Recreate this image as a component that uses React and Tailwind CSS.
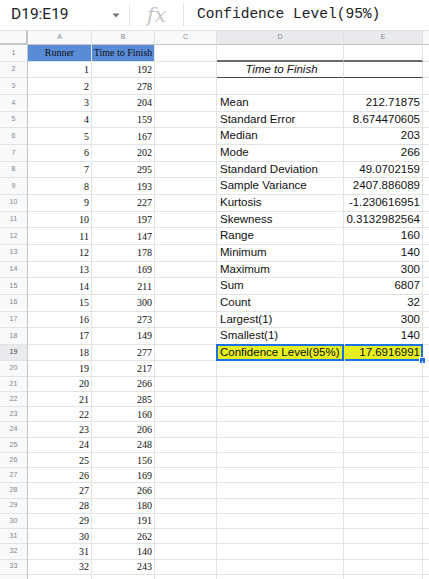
const times = [192, 278, 204, 159, 167, 202, 295, 193, 227, 197, 147, 178, 169, 211, 300, 273, 149, 277, 217, 266, 285, 160, 206, 248, 156, 169, 266, 180, 191, 262, 140, 243]

// rows 4..19 of the summary table
const stats = [
  ['Mean', '212.71875'],
  ['Standard Error', '8.674470605'],
  ['Median', '203'],
  ['Mode', '266'],
  ['Standard Deviation', '49.0702159'],
  ['Sample Variance', '2407.886089'],
  ['Kurtosis', '-1.230616951'],
  ['Skewness', '0.3132982564'],
  ['Range', '160'],
  ['Minimum', '140'],
  ['Maximum', '300'],
  ['Sum', '6807'],
  ['Count', '32'],
  ['Largest(1)', '300'],
  ['Smallest(1)', '140'],
  ['Confidence Level(95%)', '17.6916991'],
]

const serif = { fontFamily: '"Liberation Serif", "Times New Roman", serif' }
const sans = { fontFamily: '"Liberation Sans", Arial, sans-serif' }

function FormulaBar() {
  return (
    <div className="h-[31px] flex items-center border-b border-[#e1e3e1] bg-white">
      <div className="w-[108px] pl-[11px] text-[15.5px] text-[#202124]" style={{ fontFamily: 'Roboto, sans-serif' }}>
        D19:E19
      </div>
      <svg width="8" height="5" viewBox="0 0 8 5" className="ml-[4px]">
        <polygon points="0.5,0.5 7.5,0.5 4,4.5" fill="#70757a" />
      </svg>
      <div className="ml-[9px] w-px h-[22px] bg-[#e1e3e1]" />
      <div className="w-[53px] text-center text-[21px] italic text-[#c2c5c9] leading-none" style={{ fontFamily: '"DejaVu Serif", "Liberation Serif", serif', fontWeight: 300 }}>
        fx
      </div>
      <div className="w-px h-[22px] bg-[#e1e3e1]" />
      <div className="pl-[13px] text-[14.55px] text-[#202124] whitespace-nowrap" style={{ fontFamily: '"Liberation Mono", "DejaVu Sans Mono", monospace' }}>
        Confidence Level(95%)
      </div>
    </div>
  )
}

function HeaderRow() {
  const cols = [
    ['A', 'w-[64px]', false],
    ['B', 'w-[63px]', false],
    ['C', 'w-[62px]', false],
    ['D', 'w-[127px]', true],
    ['E', 'w-[79px]', true],
    ['', 'w-[40px]', false],
  ]
  return (
    <div className="flex h-[14px]">
      <div className="w-[28px] shrink-0 bg-[#f8f9fa] border-r-2 border-b-2 border-[#c4c7c5]" />
      {cols.map(([l, w, sel], i) => (
        <div
          key={i}
          className={`${w} shrink-0 flex items-center justify-center border-r border-b border-r-[#e1e3e1] border-b-[#c4c7c5] text-[7px] text-[#80868b] ${sel ? 'bg-[#e8eaed]' : 'bg-[#f8f9fa]'}`}
          style={sans}
        >
          {l}
        </div>
      ))}
    </div>
  )
}

function Row({ n }) {
  const tall = n <= 19
  const h = tall ? 'h-[16.67px]' : 'h-[15.24px]'
  const grid = 'border-r border-b border-[#e2e3e3]'
  const a = n === 1 ? 'Runner' : n <= 33 ? n - 1 : ''
  const b = n === 1 ? 'Time to Finish' : n <= 33 ? times[n - 2] : ''
  const head = n === 1
  const stat = n >= 4 && n <= 19 ? stats[n - 4] : null
  const sel = n === 19
  const edge = n === 1 ? 'border-b-2 border-b-[#6b6b6b]' : n === 2 ? 'border-b border-b-[#4a4a4a]' : 'border-b'

  return (
    <div className={`flex ${h}`}>
      <div className={`w-[28px] shrink-0 flex items-center justify-center border-r border-b border-r-[#c4c7c5] border-b-[#e2e3e3] text-[7px] ${sel ? 'bg-[#e8eaed] text-[#3c4043]' : 'bg-[#f8f9fa] text-[#80868b]'}`} style={sans}>
        {n <= 33 ? n : ''}
      </div>
      <div
        className={`w-[64px] shrink-0 flex items-center px-[2px] text-[10px] text-[#111] ${grid} ${head ? 'justify-center bg-[#5a8bd7]' : 'justify-end'}`}
        style={serif}
      >
        {a}
      </div>
      <div
        className={`w-[63px] shrink-0 flex items-center px-[2px] text-[10px] text-[#111] whitespace-nowrap ${grid} ${head ? 'justify-center bg-[#5a8bd7]' : 'justify-end'}`}
        style={serif}
      >
        {b}
      </div>
      <div className={`w-[62px] shrink-0 ${grid}`} />
      <div
        className={`relative w-[127px] shrink-0 flex items-center pl-[3px] text-[11.5px] text-[#111] whitespace-nowrap border-r border-[#e2e3e3] ${edge} ${n === 2 ? 'justify-center italic' : ''} ${sel ? 'bg-[#e6ef22]' : ''}`}
        style={sans}
      >
        {n === 2 ? 'Time to Finish' : stat ? stat[0] : ''}
        {sel && <div className="absolute -inset-px border-2 border-[#1a73e8]" />}
      </div>
      <div
        className={`relative w-[79px] shrink-0 flex items-center justify-end pr-[2px] text-[11.5px] text-[#111] whitespace-nowrap border-r border-[#e2e3e3] ${edge} ${sel ? 'bg-[#e6ef22]' : ''}`}
        style={sans}
      >
        {stat ? stat[1] : ''}
        {sel && (
          <>
            <div className="absolute -top-px -bottom-px left-px -right-px border-y-2 border-r-2 border-[#1a73e8]" />
            <div className="absolute -right-[4px] -bottom-[4px] w-[7px] h-[7px] bg-[#1a73e8] border border-white" />
          </>
        )}
      </div>
      <div className={`w-[40px] shrink-0 ${grid}`} />
    </div>
  )
}

export default function App() {
  const rows = Array.from({ length: 34 }, (_, i) => i + 1)
  return (
    <div className="w-[429px] h-[579px] overflow-hidden bg-white">
      <FormulaBar />
      <HeaderRow />
      {rows.map(n => (
        <Row key={n} n={n} />
      ))}
    </div>
  )
}
